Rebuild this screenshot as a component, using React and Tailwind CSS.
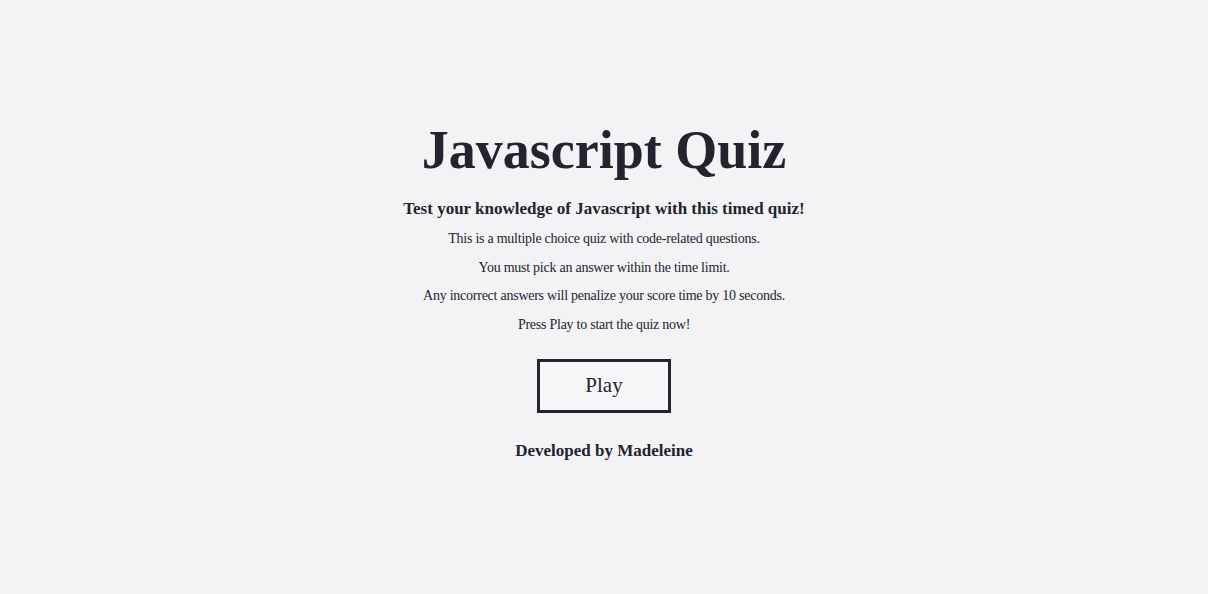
export default function App() {
  return (
    <div className="min-h-screen w-full bg-[#f3f3f5] text-[#24232f] font-['Liberation_Serif',serif]">
      <div className="flex flex-col items-center pt-[116px] text-center">
        <h1 className="text-[54px] font-bold leading-[68px]">Javascript Quiz</h1>
        <h2 className="mt-[13px] text-[17px] font-bold leading-[24px]">
          Test your knowledge of Javascript with this timed quiz!
        </h2>
        <div className="mt-[9px] flex flex-col gap-[10px] text-[14px] leading-[18.5px] tracking-[-0.25px]">
          <p>This is a multiple choice quiz with code-related questions.</p>
          <p>You must pick an answer within the time limit.</p>
          <p>Any incorrect answers will penalize your score time by 10 seconds.</p>
          <p>Press Play to start the quiz now!</p>
        </div>
        <button className="mt-[25px] h-[54px] w-[134px] border-[3px] border-[#24232f] bg-[#f6f6f9] text-[21px]">
          Play
        </button>
        <h3 className="mt-[26px] text-[17px] font-bold leading-[24px]">Developed by Madeleine</h3>
      </div>
    </div>
  );
}
